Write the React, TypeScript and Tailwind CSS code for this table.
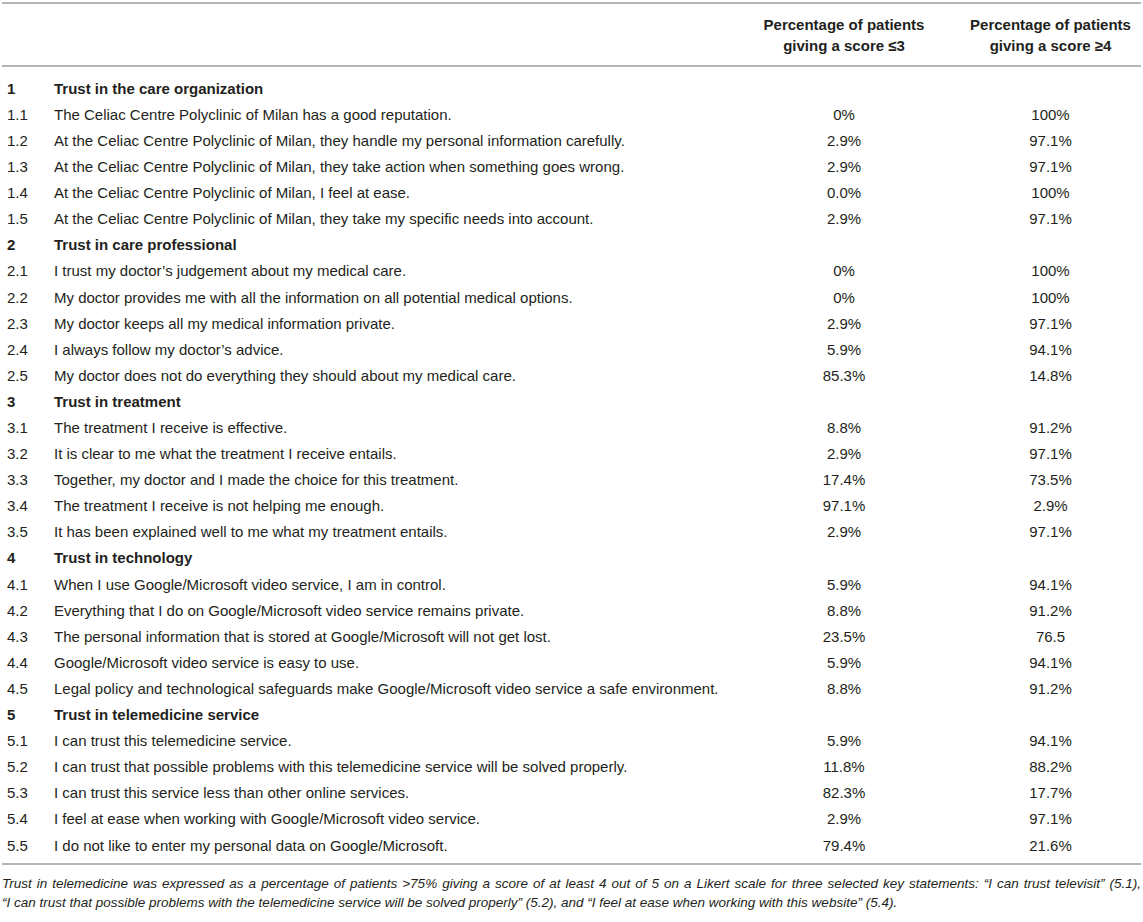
const sections: { id: string; title: string; rows: [string, string, string, string][] }[] = [
  {
    id: "1",
    title: "Trust in the care organization",
    rows: [
      ["1.1", "The Celiac Centre Polyclinic of Milan has a good reputation.", "0%", "100%"],
      ["1.2", "At the Celiac Centre Polyclinic of Milan, they handle my personal information carefully.", "2.9%", "97.1%"],
      ["1.3", "At the Celiac Centre Polyclinic of Milan, they take action when something goes wrong.", "2.9%", "97.1%"],
      ["1.4", "At the Celiac Centre Polyclinic of Milan, I feel at ease.", "0.0%", "100%"],
      ["1.5", "At the Celiac Centre Polyclinic of Milan, they take my specific needs into account.", "2.9%", "97.1%"],
    ],
  },
  {
    id: "2",
    title: "Trust in care professional",
    rows: [
      ["2.1", "I trust my doctor\u2019s judgement about my medical care.", "0%", "100%"],
      ["2.2", "My doctor provides me with all the information on all potential medical options.", "0%", "100%"],
      ["2.3", "My doctor keeps all my medical information private.", "2.9%", "97.1%"],
      ["2.4", "I always follow my doctor\u2019s advice.", "5.9%", "94.1%"],
      ["2.5", "My doctor does not do everything they should about my medical care.", "85.3%", "14.8%"],
    ],
  },
  {
    id: "3",
    title: "Trust in treatment",
    rows: [
      ["3.1", "The treatment I receive is effective.", "8.8%", "91.2%"],
      ["3.2", "It is clear to me what the treatment I receive entails.", "2.9%", "97.1%"],
      ["3.3", "Together, my doctor and I made the choice for this treatment.", "17.4%", "73.5%"],
      ["3.4", "The treatment I receive is not helping me enough.", "97.1%", "2.9%"],
      ["3.5", "It has been explained well to me what my treatment entails.", "2.9%", "97.1%"],
    ],
  },
  {
    id: "4",
    title: "Trust in technology",
    rows: [
      ["4.1", "When I use Google/Microsoft video service, I am in control.", "5.9%", "94.1%"],
      ["4.2", "Everything that I do on Google/Microsoft video service remains private.", "8.8%", "91.2%"],
      ["4.3", "The personal information that is stored at Google/Microsoft will not get lost.", "23.5%", "76.5"],
      ["4.4", "Google/Microsoft video service is easy to use.", "5.9%", "94.1%"],
      ["4.5", "Legal policy and technological safeguards make Google/Microsoft video service a safe environment.", "8.8%", "91.2%"],
    ],
  },
  {
    id: "5",
    title: "Trust in telemedicine service",
    rows: [
      ["5.1", "I can trust this telemedicine service.", "5.9%", "94.1%"],
      ["5.2", "I can trust that possible problems with this telemedicine service will be solved properly.", "11.8%", "88.2%"],
      ["5.3", "I can trust this service less than other online services.", "82.3%", "17.7%"],
      ["5.4", "I feel at ease when working with Google/Microsoft video service.", "2.9%", "97.1%"],
      ["5.5", "I do not like to enter my personal data on Google/Microsoft.", "79.4%", "21.6%"],
    ],
  },
];

const grid = "grid grid-cols-[52px_674px_232px_1fr] items-center";

export default function App() {
  return (
    <div className="min-h-[922px] bg-white px-[2px] pt-[2px] font-['Liberation_Sans',Arial,sans-serif] text-[15px] text-[#231f20]">
      <div className="border-y-2 border-[#b5b5b5]">
        <div className={`${grid} h-[61px] font-bold leading-[21px]`}>
          <div />
          <div />
          <div className="text-center">
            Percentage of patients
            <br />
            giving a score ≤3
          </div>
          <div className="text-center">
            Percentage of patients
            <br />
            giving a score ≥4
          </div>
        </div>
      </div>

      <div className="border-b-2 border-[#b5b5b5] pb-[4px] pt-[9px]">
        {sections.map((s) => (
          <div key={s.id}>
            <div className={`${grid} h-[26.1px] font-bold`}>
              <div className="pl-[5px]">{s.id}</div>
              <div>{s.title}</div>
              <div />
              <div />
            </div>
            {s.rows.map((r) => (
              <div key={r[0]} className={`${grid} h-[26.1px]`}>
                <div className="pl-[5px]">{r[0]}</div>
                <div className="whitespace-nowrap">{r[1]}</div>
                <div className="text-center">{r[2]}</div>
                <div className="text-center">{r[3]}</div>
              </div>
            ))}
          </div>
        ))}
      </div>

      <div className="mt-[9px] text-[13.5px] italic leading-[19px] text-[#231f20]">
        <p className="text-justify [text-align-last:justify]">
          Trust in telemedicine was expressed as a percentage of patients &gt;75% giving a score of at least 4 out of 5 on a Likert scale for three selected key statements: “I can trust televisit” (5.1),
        </p>
        <p>
          “I can trust that possible problems with the telemedicine service will be solved properly” (5.2), and “I feel at ease when working with this website” (5.4).
        </p>
      </div>
    </div>
  );
}
